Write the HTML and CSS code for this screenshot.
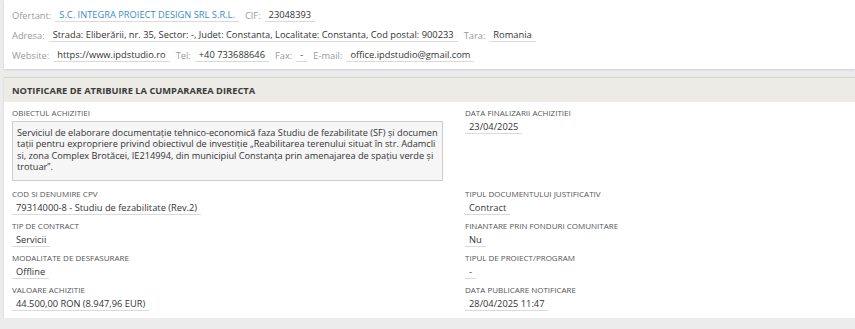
FILE: index.html
```html
<!DOCTYPE html>
<html lang="ro">
<head>
  <meta charset="UTF-8" />
  <title>Notificare de atribuire</title>
  <link rel="stylesheet" href="styles.css">
</head>
<body>
  <div class="card supplier">
    <div class="line">
      <span class="lbl">Ofertant:</span>
      <span class="val link">S.C. INTEGRA PROIECT DESIGN SRL S.R.L.</span>
      <span class="lbl">CIF:</span>
      <span class="val">23048393</span>
    </div>
    <div class="line">
      <span class="lbl">Adresa:</span>
      <span class="val">Strada: Eliberării, nr. 35, Sector: -, Judet: Constanta, Localitate: Constanta, Cod postal: 900233</span>
      <span class="lbl">Tara:</span>
      <span class="val">Romania</span>
    </div>
    <div class="line">
      <span class="lbl">Website:</span>
      <span class="val">https://www.ipdstudio.ro</span>
      <span class="lbl">Tel:</span>
      <span class="val">+40 733688646</span>
      <span class="lbl">Fax:</span>
      <span class="val">-</span>
      <span class="lbl">E-mail:</span>
      <span class="val">office.ipdstudio@gmail.com</span>
    </div>
  </div>

  <div class="card notice">
    <div class="notice-head">NOTIFICARE DE ATRIBUIRE LA CUMPARAREA DIRECTA</div>
    <div class="notice-body">
      <div class="field wide">
        <div class="cap">OBIECTUL ACHIZITIEI</div>
        <div class="textbox">Serviciul de elaborare documentaţie tehnico-economică faza Studiu de fezabilitate (SF) și documentații pentru expropriere privind obiectivul de investiție „Reabilitarea terenului situat în str. Adamcli si, zona Complex Brotăcei, IE214994, din municipiul Constanța prin amenajarea de spațiu verde și trotuar”.</div>
      </div>
      <div class="field">
        <div class="cap">DATA FINALIZARII ACHIZITIEI</div>
        <span class="val">23/04/2025</span>
      </div>

      <div class="field">
        <div class="cap">COD SI DENUMIRE CPV</div>
        <span class="val">79314000-8 - Studiu de fezabilitate (Rev.2)</span>
      </div>
      <div class="field">
        <div class="cap">TIPUL DOCUMENTULUI JUSTIFICATIV</div>
        <span class="val">Contract</span>
      </div>

      <div class="field">
        <div class="cap">TIP DE CONTRACT</div>
        <span class="val">Servicii</span>
      </div>
      <div class="field">
        <div class="cap">FINANTARE PRIN FONDURI COMUNITARE</div>
        <span class="val">Nu</span>
      </div>

      <div class="field">
        <div class="cap">MODALITATE DE DESFASURARE</div>
        <span class="val">Offline</span>
      </div>
      <div class="field">
        <div class="cap">TIPUL DE PROIECT/PROGRAM</div>
        <span class="val">-</span>
      </div>

      <div class="field">
        <div class="cap">VALOARE ACHIZITIE</div>
        <span class="val">44.500,00 RON (8.947,96 EUR)</span>
      </div>
      <div class="field">
        <div class="cap">DATA PUBLICARE NOTIFICARE</div>
        <span class="val">28/04/2025 11:47</span>
      </div>
    </div>
  </div>
</body>
</html>
```

FILE: styles.css
```css
body {
  margin: 0;
  padding: 0 0 0 4px;
  background-color: #ececec;
  font-family: 'Open Sans', sans-serif;
  color: #333333;
}

.card {
  background-color: #ffffff;
  box-shadow: 0 1px 2px rgba(0, 0, 0, 0.12);
}

/* supplier block */
.supplier {
  box-sizing: border-box;
  height: 69px;
  padding: 5px 8px 0;
}

.line {
  display: flex;
  align-items: center;
  height: 20px;
  font-size: 9.3px;
  white-space: nowrap;
}

.lbl {
  color: #9a9a9a;
  margin-right: 4px;
}

.val {
  display: inline-block;
  padding: 0 4px;
  border-bottom: 1px solid #dadada;
  color: #333333;
  font-size: 9.3px;
  line-height: 12px;
}

.line .val {
  margin-right: 6px;
}

.link {
  color: #3b8cc6;
}

/* notice block */
.notice {
  box-sizing: border-box;
  margin-top: 8px;
  height: 241px;
}

.notice-head {
  box-sizing: border-box;
  height: 25px;
  background-color: #ecebe5;
  border-top: 1px solid #d6d6d0;
  padding: 6px 8px 0;
  font-size: 9.3px;
  font-weight: 700;
  color: #3c3c3c;
  line-height: 14px;
}

.notice-body {
  display: grid;
  grid-template-columns: 431px 1fr;
  column-gap: 22px;
  padding: 5px 8px 0;
}

.field {
  display: flex;
  flex-direction: column;
  align-items: flex-start;
  height: 32px;
}

.field.wide {
  align-items: stretch;
  height: 81px;
}

.cap {
  font-size: 8px;
  color: #555555;
  line-height: 12px;
  margin-bottom: 1px;
}

.field .val {
  line-height: 13px;
}

.wide .cap {
  margin-bottom: 2px;
}

.textbox {
  box-sizing: border-box;
  height: 60px;
  padding: 5px 4px 0;
  background-color: #f6f6f6;
  border: 1px solid #cdcdcd;
  font-size: 9.2px;
  line-height: 11.3px;
  color: #333333;
  word-break: break-all;
}
```
